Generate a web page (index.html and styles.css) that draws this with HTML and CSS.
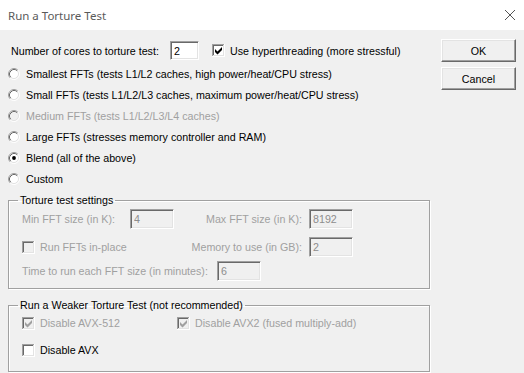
FILE: index.html
```html
<!DOCTYPE html>
<html lang="en">
  <head>
    <meta charset="UTF-8" />
    <title>Run a Torture Test</title>
    <link rel="stylesheet" href="styles.css">
  </head>
  <body>
    <svg class="sprite" xmlns="http://www.w3.org/2000/svg">
      <symbol id="rad-off" viewBox="0 0 12 12">
        <circle cx="6" cy="6" r="4.5" fill="#fff" />
        <path d="M2.11 9.89 A5.5 5.5 0 0 1 9.89 2.11" stroke="#a0a0a0" fill="none" />
        <path d="M9.89 2.11 A5.5 5.5 0 0 1 2.11 9.89" stroke="#fff" fill="none" />
        <path d="M2.82 9.18 A4.5 4.5 0 0 1 9.18 2.82" stroke="#696969" fill="none" />
        <path d="M9.18 2.82 A4.5 4.5 0 0 1 2.82 9.18" stroke="#e3e3e3" fill="none" />
      </symbol>
      <symbol id="rad-dis" viewBox="0 0 12 12">
        <circle cx="6" cy="6" r="4.5" fill="#f0f0f0" />
        <path d="M2.11 9.89 A5.5 5.5 0 0 1 9.89 2.11" stroke="#a0a0a0" fill="none" />
        <path d="M9.89 2.11 A5.5 5.5 0 0 1 2.11 9.89" stroke="#fff" fill="none" />
        <path d="M2.82 9.18 A4.5 4.5 0 0 1 9.18 2.82" stroke="#696969" fill="none" />
        <path d="M9.18 2.82 A4.5 4.5 0 0 1 2.82 9.18" stroke="#e3e3e3" fill="none" />
      </symbol>
      <symbol id="rad-on" viewBox="0 0 12 12">
        <use href="#rad-off" />
        <circle cx="6" cy="6" r="1.9" fill="#000" />
      </symbol>
      <symbol id="chk-box" viewBox="0 0 13 13">
        <rect width="13" height="13" fill="#fff" />
        <rect width="12" height="12" fill="#a0a0a0" />
        <rect x="1" y="1" width="11" height="11" fill="#e3e3e3" />
        <rect x="1" y="1" width="10" height="10" fill="#696969" />
        <rect x="2" y="2" width="9" height="9" fill="#fff" />
      </symbol>
      <symbol id="chk-box-dis" viewBox="0 0 13 13">
        <rect width="13" height="13" fill="#fff" />
        <rect width="12" height="12" fill="#a0a0a0" />
        <rect x="1" y="1" width="11" height="11" fill="#e3e3e3" />
        <rect x="1" y="1" width="10" height="10" fill="#696969" />
        <rect x="2" y="2" width="9" height="9" fill="#f0f0f0" />
      </symbol>
      <symbol id="chk-on" viewBox="0 0 13 13">
        <use href="#chk-box" />
        <polygon points="3,5 5.5,7.5 10,3 10,6 5.5,10.5 3,8" fill="#000" />
      </symbol>
      <symbol id="chk-dis-on" viewBox="0 0 13 13">
        <use href="#chk-box-dis" />
        <polygon points="3,5 5.5,7.5 10,3 10,6 5.5,10.5 3,8" fill="#a0a0a0" />
      </symbol>
    </svg>

    <div class="window">
      <div class="titlebar">
        <span class="title">Run a Torture Test</span>
        <svg class="close" viewBox="0 0 10 10">
          <path d="M0 0 L10 10 M10 0 L0 10" stroke="#555" stroke-width="1" fill="none" />
        </svg>
      </div>

      <div class="client">
        <div class="main">
          <div class="cores-row">
            <label class="cores-label" for="cores">Number of cores to torture test:</label>
            <input class="field field-white cores-field" id="cores" type="text" value="2" />
            <svg class="check cores-check"><use href="#chk-on" /></svg>
            <span class="check-text">Use hyperthreading (more stressful)</span>
          </div>

          <ul class="radios">
            <li class="radio"><svg><use href="#rad-off" /></svg><span>Smallest FFTs (tests L1/L2 caches, high power/heat/CPU stress)</span></li>
            <li class="radio"><svg><use href="#rad-off" /></svg><span>Small FFTs (tests L1/L2/L3 caches, maximum power/heat/CPU stress)</span></li>
            <li class="radio disabled"><svg><use href="#rad-dis" /></svg><span>Medium FFTs (tests L1/L2/L3/L4 caches)</span></li>
            <li class="radio"><svg><use href="#rad-off" /></svg><span>Large FFTs (stresses memory controller and RAM)</span></li>
            <li class="radio"><svg><use href="#rad-on" /></svg><span>Blend (all of the above)</span></li>
            <li class="radio"><svg><use href="#rad-off" /></svg><span>Custom</span></li>
          </ul>

          <fieldset class="group settings">
            <legend>Torture test settings</legend>
            <div class="set-row row-a disabled">
              <span class="cell-l">Min FFT size (in K):</span>
              <input class="field" type="text" value="4" disabled />
              <span class="cell-r">Max FFT size (in K):</span>
              <input class="field field-gap" type="text" value="8192" disabled />
            </div>
            <div class="set-row row-b disabled">
              <span class="cell-l check-item">
                <svg class="check"><use href="#chk-box-dis" /></svg>
                <span>Run FFTs in-place</span>
              </span>
              <span class="cell-mid"></span>
              <span class="cell-r">Memory to use (in GB):</span>
              <input class="field field-gap" type="text" value="2" disabled />
            </div>
            <div class="set-row row-c disabled">
              <span class="cell-time">Time to run each FFT size (in minutes):</span>
              <input class="field" type="text" value="6" disabled />
            </div>
          </fieldset>

          <fieldset class="group weak">
            <legend>Run a Weaker Torture Test (not recommended)</legend>
            <div class="check-row row-1 disabled">
              <span class="check-item avx512">
                <svg class="check"><use href="#chk-dis-on" /></svg>
                <span>Disable AVX-512</span>
              </span>
              <span class="check-item">
                <svg class="check"><use href="#chk-dis-on" /></svg>
                <span>Disable AVX2 (fused multiply-add)</span>
              </span>
            </div>
            <div class="check-row row-2">
              <span class="check-item">
                <svg class="check"><use href="#chk-box" /></svg>
                <span>Disable AVX</span>
              </span>
            </div>
          </fieldset>
        </div>

        <div class="side">
          <button class="btn" type="button">OK</button>
          <button class="btn" type="button">Cancel</button>
        </div>
      </div>
    </div>
  </body>
</html>
```

FILE: styles.css
```css
* {
  box-sizing: border-box;
}

body {
  margin: 0;
  background-color: #f0f0f0;
  font-family: "Liberation Sans", Arial, sans-serif;
  font-size: 10.7px;
  color: #000;
}

.sprite {
  display: block;
  width: 0;
  height: 0;
  overflow: hidden;
}

.window {
  width: 524px;
  height: 373px;
  display: flex;
  flex-direction: column;
  overflow: hidden;
}

/* title bar */
.titlebar {
  flex: none;
  height: 30px;
  display: flex;
  align-items: center;
  justify-content: space-between;
  padding: 0 9px 0 8px;
  background-color: #fff;
}

.title {
  font-family: "Noto Sans", "Open Sans", sans-serif;
  font-size: 11.5px;
  color: #5a5a5a;
}

.close {
  width: 10px;
  height: 10px;
}

/* client area */
.client {
  flex: 1;
  display: flex;
}

.main {
  width: 430px;
  padding-left: 8px;
}

.side {
  display: flex;
  flex-direction: column;
  gap: 5px;
  padding-top: 9px;
  margin-left: 11px;
}

.btn {
  width: 75px;
  height: 23px;
  padding: 0;
  font: inherit;
  color: #000;
  background-color: #f0f0f0;
  border: 1px solid;
  border-color: #fff #696969 #696969 #fff;
  box-shadow: inset -1px -1px 0 #a0a0a0, inset 1px 1px 0 #e3e3e3;
  border-radius: 0;
}

.disabled {
  color: #a0a0a0;
}

/* sunken edit boxes */
.field {
  width: 44px;
  height: 20px;
  margin: 0;
  padding: 0 0 0 3px;
  font: inherit;
  color: #8d8d8d;
  background-color: #f0f0f0;
  border: 1px solid;
  border-color: #a0a0a0 #fff #fff #a0a0a0;
  box-shadow: inset 1px 1px 0 #696969, inset -1px -1px 0 #e3e3e3;
  border-radius: 0;
  outline: none;
}

.field-white {
  color: #000;
  background-color: #fff;
}

.field-gap {
  margin-left: 7px;
}

.check {
  flex: none;
  width: 13px;
  height: 13px;
}

/* top row */
.cores-row {
  display: flex;
  align-items: center;
  height: 19px;
  margin-top: 11px;
  padding-left: 3px;
}

.cores-label {
  width: 159px;
}

.cores-field {
  width: 29px;
  height: 19px;
}

.cores-check {
  margin-left: 13px;
}

.check-text {
  margin-left: 5px;
}

/* radio list */
.radios {
  list-style: none;
  margin: 3px 0 0;
  padding: 0;
}

.radio {
  display: flex;
  align-items: center;
  gap: 6px;
  height: 21px;
  white-space: nowrap;
}

.radio svg {
  flex: none;
  width: 12px;
  height: 12px;
}

/* group boxes */
.group {
  width: 422px;
  min-width: 0;
  margin: 5px 0 0;
  padding: 0 0 7px;
  border: 1px solid #a0a0a0;
  box-shadow: inset 1px 1px 0 #fff, 1px 1px 0 #fff;
}

.group legend {
  margin-left: 9px;
  padding: 0 2px;
  line-height: 13px;
  color: #000;
}

.set-row,
.check-row {
  display: flex;
  align-items: center;
  height: 20px;
  padding-left: 13px;
  white-space: nowrap;
}

.row-a {
  margin-top: 2px;
}

.row-b {
  margin-top: 8px;
}

.row-c {
  margin-top: 4px;
}

.cell-l {
  width: 108px;
}

.cell-mid {
  width: 44px;
}

.cell-r {
  width: 128px;
  text-align: right;
}

.cell-time {
  width: 195px;
}

.check-item {
  display: flex;
  align-items: center;
  gap: 5px;
}

.weak {
  margin-top: 10px;
  padding-bottom: 11px;
}

.row-1 {
  margin-top: 1px;
}

.row-2 {
  margin-top: 7px;
}

.avx512 {
  width: 155px;
}
```
